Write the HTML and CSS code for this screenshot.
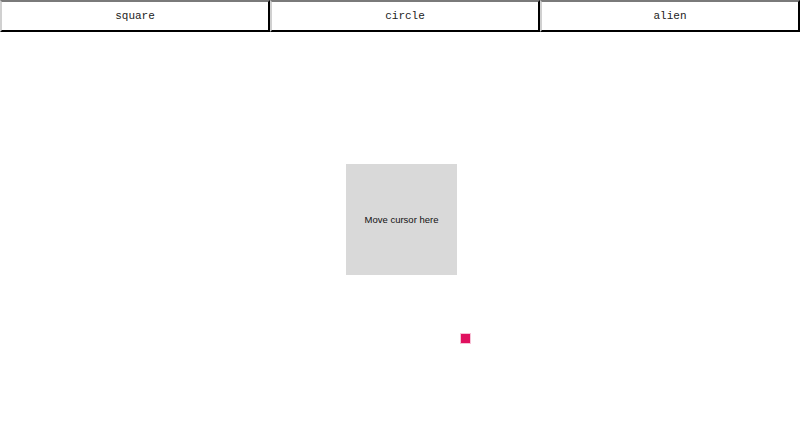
FILE: index.html
```html
<!DOCTYPE html>
<html lang="en">
<head>
  <meta charset="UTF-8" />
  <meta name="viewport" content="width=device-width, initial-scale=1" />
  <title>Cursor shapes</title>
  <link rel="stylesheet" href="styles.css">
</head>
<body>
  <div class="shape-buttons">
    <button class="shape-btn">square</button>
    <button class="shape-btn">circle</button>
    <button class="shape-btn">alien</button>
  </div>

  <div class="stage">
    <div class="target">Move cursor here</div>
  </div>

  <div class="cursor-dot"></div>
</body>
</html>
```

FILE: styles.css
```css
html, body {
  margin: 0;
  height: 100%;
  background: #fff;
  overflow: hidden;
}
.shape-buttons {
  display: flex;
  height: 32px;
}
.shape-btn {
  flex: 0 0 270px;
  height: 32px;
  margin: 0;
  padding: 0 0 1px;
  background: #fff;
  border: 2px outset #767676;
  border-top-color: #7a7a7a;
  border-left-color: #d0d0d0;
  border-right-color: #3c3c3c;
  border-bottom-color: #3c3c3c;
  font-family: "Liberation Mono", "Courier New", monospace;
  font-size: 11px;
  color: #222;
}
.shape-btn:last-child {
  flex: 1 1 auto;
}
.stage {
  height: calc(100vh - 32px);
  padding-bottom: 32px;
  box-sizing: border-box;
  display: flex;
  align-items: center;
  justify-content: center;
}
.target {
  width: 111px;
  height: 111px;
  margin-left: 3px;
  background: #d9d9d9;
  display: flex;
  align-items: center;
  justify-content: center;
  font-family: "Liberation Sans", Arial, sans-serif;
  font-size: 9.5px;
  color: #111;
}
.cursor-dot {
  position: absolute;
  left: 461px;
  top: 334px;
  width: 9px;
  height: 9px;
  background: #e0115f;
  box-shadow: 0 0 0 1px rgba(224, 17, 95, 0.25);
}
```
